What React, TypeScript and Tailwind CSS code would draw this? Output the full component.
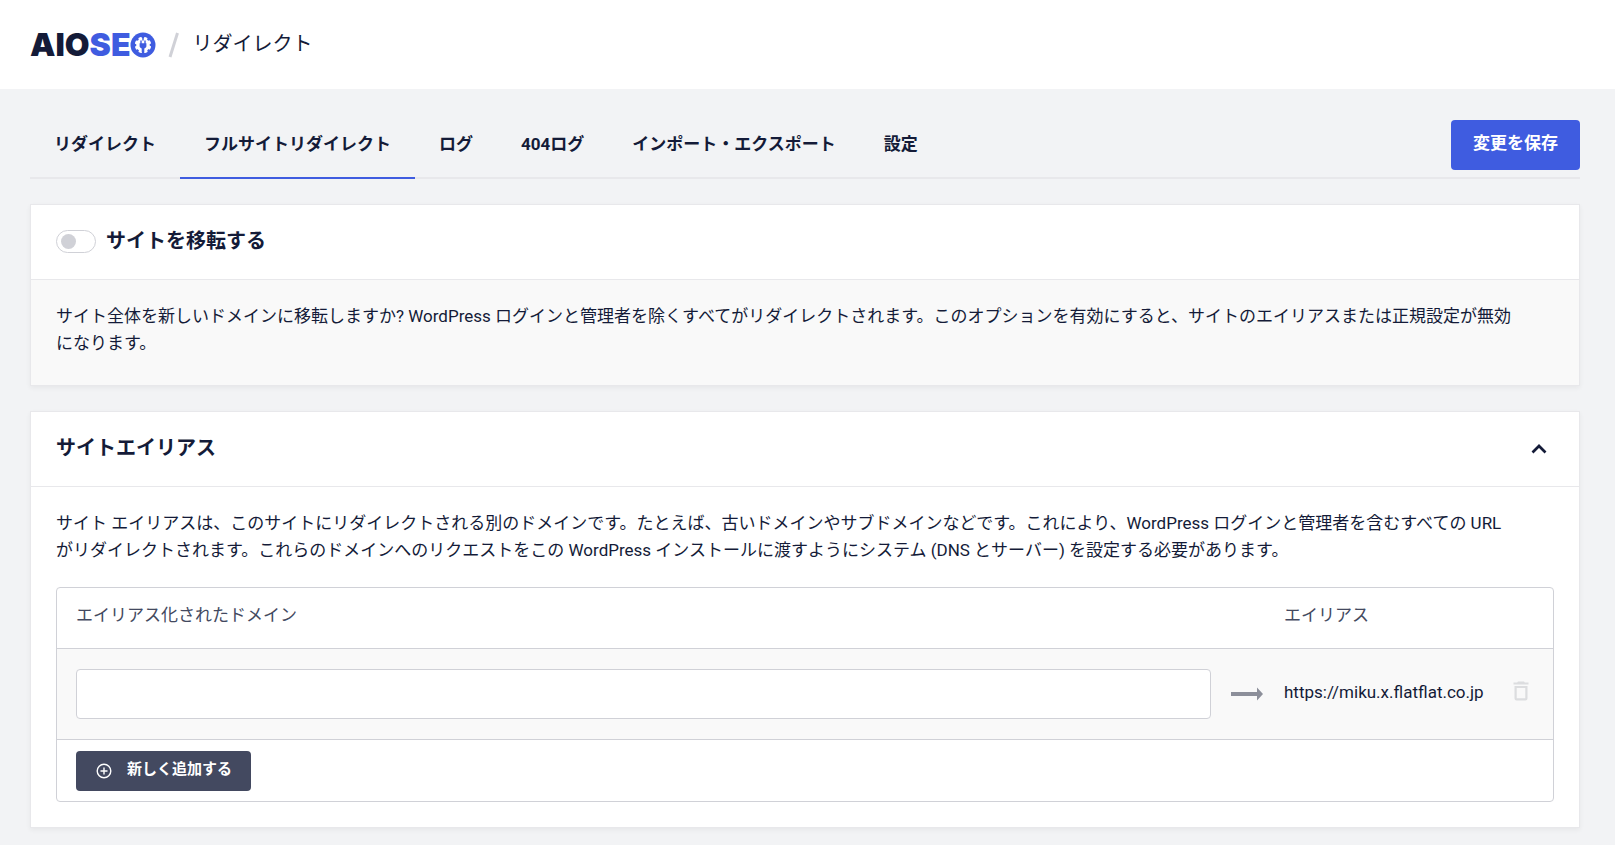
import { useState } from 'react'

const TABS = ['リダイレクト', 'フルサイトリダイレクト', 'ログ', '404ログ', 'インポート・エクスポート', '設定']

function Logo() {
  return (
    <a href="#" aria-label="AIOSEO" className="flex items-center font-[Inter] text-[32px] leading-8 font-black">
      <span className="text-[#141b38]">AIO</span>
      <span className="text-[#3f5ce0]">SE</span>
      <svg viewBox="0 0 26 26" className="size-[26px]" aria-hidden="true">
        <circle cx="13" cy="13" r="12.5" fill="#3f5ce0" />
        <g fill="#fff">
          <circle cx="13" cy="13" r="6.8" />
          {[22, 67, 112, 157, 202, 247, 292, 337].map((angle) => (
            <rect key={angle} x="11.2" y="4.8" width="3.6" height="4" rx="0.8" transform={`rotate(${angle} 13 13)`} />
          ))}
        </g>
        {/* plug in the middle of the gear */}
        <path
          d="M13 4.500v3.500M11 9v3M15 9v3"
          stroke="#3f5ce0"
          strokeWidth="1.4"
          strokeLinecap="round"
        />
        <path d="M9.600 11.200h6.800v2.800c0 1.300-.9 2.200-2.100 2.400V20h-2.600v-3.600c-1.200-.2-2.100-1.100-2.100-2.400z" fill="#3f5ce0" />
      </svg>
    </a>
  )
}

export default function App() {
  const [activeTab, setActiveTab] = useState(1)
  const [relocate, setRelocate] = useState(false)
  const [open, setOpen] = useState(true)
  const [domains, setDomains] = useState([''])

  const updateDomain = (index: number, value: string) =>
    setDomains((list) => list.map((domain, i) => (i === index ? value : domain)))

  return (
    <div className="min-h-screen bg-[#f2f3f5] font-[Roboto,'Noto_Sans_CJK_JP',sans-serif] text-[17px] leading-[27px] text-[#141b38]">
      <header className="flex h-[89px] items-center bg-white pl-[30px]">
        <Logo />
        <svg viewBox="0 0 12 26" className="ml-3 h-[26px] w-3" aria-hidden="true">
          <path d="M9.500 1L2 25" stroke="#d0d1d7" strokeWidth="3" />
        </svg>
        <h1 className="ml-3 text-[20px]">リダイレクト</h1>
      </header>

      <main className="pt-[31px] pr-[35px] pb-[18px] pl-[30px]">
        <nav className="flex items-start justify-between border-b-2 border-[#e8e8eb]">
          <div className="-mb-0.5 flex">
            {TABS.map((tab, index) => (
              <button
                key={tab}
                type="button"
                onClick={() => setActiveTab(index)}
                className={`h-[59px] border-b-2 px-6 pb-2 font-bold ${
                  index === activeTab ? 'border-[#3f5ce0]' : 'border-transparent'
                }`}
              >
                {tab}
              </button>
            ))}
          </div>
          <button type="button" className="h-[50px] rounded bg-[#3f5ce0] px-[22px] pb-1 font-bold text-white">
            変更を保存
          </button>
        </nav>

        <section className="mt-[25px] border border-[#e8e8eb] bg-white shadow-[0_2px_5px_rgba(0,0,0,0.05)]">
          <label className="flex h-[75px] items-center gap-2.5 border-b border-[#e8e8eb] px-[25px] pb-0.5">
            <input
              type="checkbox"
              checked={relocate}
              onChange={(event) => setRelocate(event.target.checked)}
              className="h-[23px] w-10 appearance-none rounded-full border border-[#d0d1d7] bg-white px-1 py-[3px] before:block before:size-[15px] before:rounded-full before:bg-[#d0d1d7] checked:before:ml-auto checked:before:bg-[#3f5ce0]"
            />
            <span className="text-[20px] font-bold">サイトを移転する</span>
          </label>
          <p className="bg-[#f9f9f9] px-[25px] pt-[23px] pb-7">
            サイト全体を新しいドメインに移転しますか? WordPress
            ログインと管理者を除くすべてがリダイレクトされます。このオプションを有効にすると、サイトのエイリアスまたは正規設定が無効
            <br />
            になります。
          </p>
        </section>

        <section className="mt-[25px] border border-[#e8e8eb] bg-white shadow-[0_2px_5px_rgba(0,0,0,0.05)]">
          <div className="flex h-[75px] items-center justify-between border-b border-[#e8e8eb] px-[25px]">
            <h2 className="pb-0.5 text-[20px] font-bold">サイトエイリアス</h2>
            <button type="button" aria-label="開閉" aria-expanded={open} onClick={() => setOpen(!open)} className="mr-[3px]">
              <svg viewBox="0 0 24 24" className={`size-6 ${open ? '' : 'rotate-180'}`} aria-hidden="true">
                <path d="M5.500 15.500L12 9l6.500 6.500" fill="none" stroke="#141b38" strokeWidth="2.700" />
              </svg>
            </button>
          </div>

          {open && (
            <div className="px-[25px] pt-[23px] pb-[25px]">
              <p>
                サイト エイリアスは、このサイトにリダイレクトされる別のドメインです。たとえば、古いドメインやサブドメインなどです。これにより、WordPress
                ログインと管理者を含むすべての URL
                <br />
                がリダイレクトされます。これらのドメインへのリクエストをこの WordPress インストールに渡すようにシステム (DNS
                とサーバー) を設定する必要があります。
              </p>

              <div className="mt-[23px] rounded border border-[#d0d1d7]">
                <table className="w-full">
                  <thead>
                    <tr className="h-[60px] border-b border-[#d0d1d7] text-left text-[#434960]">
                      <th className="pb-1 pl-[19px] font-normal">エイリアス化されたドメイン</th>
                      <th className="w-[73px]" />
                      <th className="w-[229px] pb-1 font-normal">エイリアス</th>
                      <th className="w-10" />
                    </tr>
                  </thead>
                  <tbody>
                    {domains.map((domain, index) => (
                      <tr key={index} className="h-[91px] border-b border-[#d0d1d7] bg-[#f9f9f9]">
                        <td className="pl-[19px]">
                          <input
                            type="text"
                            value={domain}
                            aria-label="エイリアス化されたドメイン"
                            onChange={(event) => updateDomain(index, event.target.value)}
                            className="block h-[50px] w-full rounded border border-[#d0d1d7] bg-white px-4"
                          />
                        </td>
                        <td className="pl-5">
                          <svg viewBox="0 0 32 14" className="h-3.5 w-8" aria-hidden="true">
                            <path d="M0 5h26V.5L32 7l-6 6.500V9H0z" fill="#8c8f9a" />
                          </svg>
                        </td>
                        <td className="pb-0.5">https://miku.x.flatflat.co.jp</td>
                        <td className="pb-1.5">
                          <button
                            type="button"
                            aria-label="削除"
                            onClick={() => setDomains((list) => list.filter((_, i) => i !== index))}
                            className="block"
                          >
                            <svg viewBox="0 0 16 20" className="h-5 w-4" aria-hidden="true">
                              <path
                                d="M5 0.500h6l.8 1H15.500v2H.5v-2h3.700zM1.500 5h13v12.500a2 2 0 0 1-2 2h-9a2 2 0 0 1-2-2zM3.700 7v10.300h8.600V7z"
                                fill="#dcdddf"
                                fillRule="evenodd"
                              />
                            </svg>
                          </button>
                        </td>
                      </tr>
                    ))}
                  </tbody>
                </table>
                <div className="pt-[11px] pb-2.5 pl-[19px]">
                  <button
                    type="button"
                    onClick={() => setDomains((list) => [...list, ''])}
                    className="flex h-10 items-center gap-[15px] rounded bg-[#434960] pr-[19px] pl-5 text-[15px] font-bold text-white"
                  >
                    <svg viewBox="0 0 16 16" className="size-4" fill="none" stroke="#fff" strokeWidth="1.400" aria-hidden="true">
                      <circle cx="8" cy="8" r="6.800" />
                      <path d="M8 4.500v7M4.500 8h7" />
                    </svg>
                    <span className="pb-0.5">新しく追加する</span>
                  </button>
                </div>
              </div>
            </div>
          )}
        </section>
      </main>
    </div>
  )
}
